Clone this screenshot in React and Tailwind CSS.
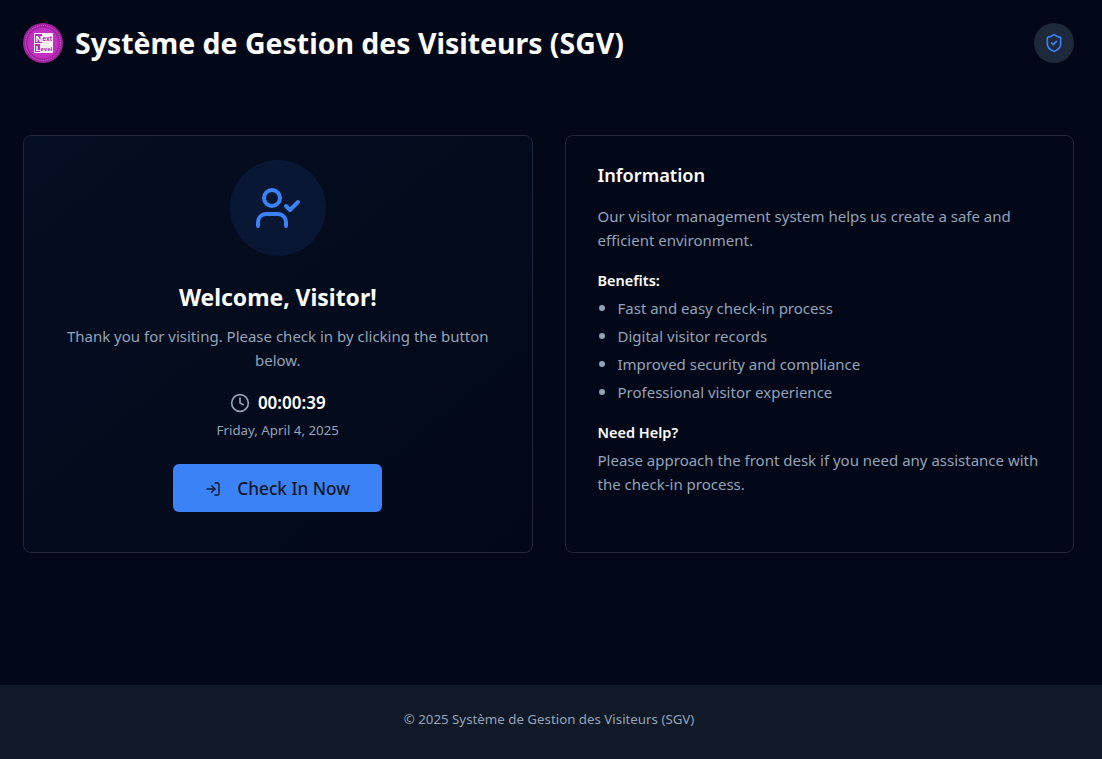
import { Clock, LogIn, ShieldCheck, UserCheck } from "lucide-react";

const benefits = [
  "Fast and easy check-in process",
  "Digital visitor records",
  "Improved security and compliance",
  "Professional visitor experience",
];

const Logo = () => (
  <svg viewBox="0 0 40 40" className="w-10 h-10 shrink-0" fontFamily="Liberation Sans, sans-serif" fontWeight="700">
    <circle cx="20" cy="20" r="20" fill="#a01f9e" />
    <circle cx="20" cy="20" r="17.5" fill="none" stroke="#e6a6e6" strokeWidth="0.7" strokeDasharray="1 1" />
    <circle cx="20" cy="20" r="15.5" fill="#c32fc0" />
    <rect x="11" y="10" width="19" height="20" rx="1" fill="#fbeffb" />
    <rect x="12" y="11" width="7" height="9" fill="#b52fb3" />
    <rect x="12" y="21" width="5" height="8" fill="#b52fb3" />
    <text x="12.6" y="19" fontSize="9.5" fill="#fff">N</text>
    <text x="19.5" y="18" fontSize="6.5" fill="#a3209f">ext</text>
    <text x="12.8" y="27.8" fontSize="8" fill="#fff">L</text>
    <text x="17.5" y="27.5" fontSize="6" fill="#a3209f">evel</text>
  </svg>
);

export default function App() {
  return (
    <div className="min-h-screen flex flex-col bg-[#020817] text-white font-['Noto_Sans',sans-serif]">
      <header className="flex justify-between px-[23px] pt-[23px] h-[87px] items-start">
        <div className="flex items-center gap-3">
          <Logo />
          <h1 className="text-[28.45px] font-bold leading-10">Système de Gestion des Visiteurs (SGV)</h1>
        </div>
        <div className="w-10 h-10 mr-[5px] rounded-full bg-[#1e293b] flex items-center justify-center">
          <ShieldCheck className="w-5 h-5 text-[#3b82f6]" />
        </div>
      </header>

      <main className="flex-1 px-[23px] pt-[48px]">
        <div className="grid grid-cols-2 gap-8 mr-[5px]">
          <section className="h-[418px] rounded-lg border border-[#1e293b] bg-gradient-to-br from-[#3b82f6]/5 to-transparent px-8 pt-6 flex flex-col items-center text-center">
            <div className="w-24 h-24 rounded-full bg-[#3b82f6]/10 flex items-center justify-center mb-[26px]">
              <UserCheck className="w-12 h-12 text-[#3b82f6]" />
            </div>
            <h2 className="text-[22.9px] leading-8 font-bold mb-[10px]">Welcome, Visitor!</h2>
            <p className="text-[#94a3b8] text-[15px] leading-6 mb-[17px]">
              Thank you for visiting. Please check in by clicking the button below.
            </p>
            <div className="flex items-center gap-2 text-[17px] font-semibold leading-7">
              <Clock className="w-5 h-5 text-[#94a3b8]" />
              <span>00:00:39</span>
            </div>
            <p className="text-[#94a3b8] text-[13.3px] leading-5 mt-[3px] mb-6">Friday, April 4, 2025</p>
            <button className="h-12 w-[209px] rounded-md bg-[#3b82f6] text-[#0f172a] text-[17.2px] font-medium flex items-center justify-center gap-4 pt-[2px]">
              <LogIn className="w-4 h-4" />
              Check In Now
            </button>
          </section>

          <section className="h-[418px] rounded-lg border border-[#1e293b] bg-[#020817] px-8 pt-6">
            <h3 className="text-[18.2px] leading-7 font-semibold mt-[1px] mb-[15px]">Information</h3>
            <p className="text-[#94a3b8] text-[15px] leading-6 mb-4">
              Our visitor management system helps us create a safe and efficient environment.
            </p>
            <h4 className="text-[14.5px] leading-6 font-semibold">Benefits:</h4>
            <ul className="list-disc marker:text-[17px] pl-5 text-[15px] text-[#94a3b8] mb-4 mt-1">
              {benefits.map((item, index) => (
                <li key={index} className="h-6 leading-6 mb-1">{item}</li>
              ))}
            </ul>
            <h4 className="text-[14.5px] leading-6 font-semibold mb-1">Need Help?</h4>
            <p className="text-[#94a3b8] text-[15px] leading-6">
              Please approach the front desk if you need any assistance with the check-in process.
            </p>
          </section>
        </div>
      </main>

      <footer className="h-[74px] pb-1 pr-1 bg-[#0f1927] flex items-center justify-center text-[#94a3b8] text-[13.3px]">
        © 2025 Système de Gestion des Visiteurs (SGV)
      </footer>
    </div>
  );
}
